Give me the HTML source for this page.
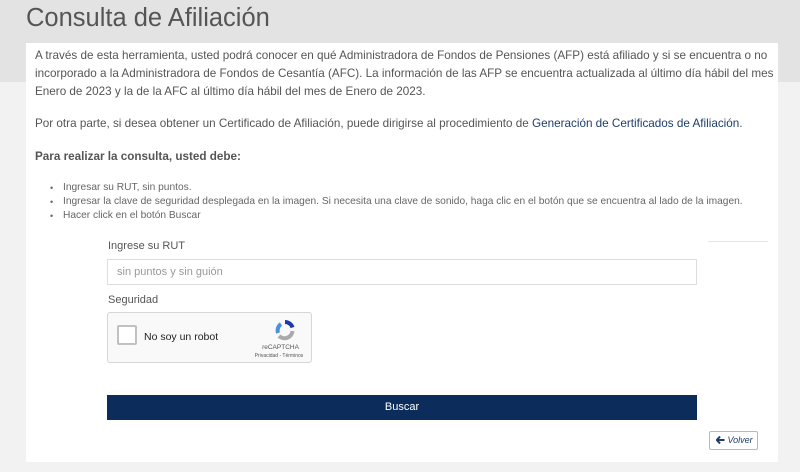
<!DOCTYPE html>
<html><head><meta charset="utf-8"><style>
*{margin:0;padding:0;box-sizing:border-box}
body{width:800px;height:472px;overflow:hidden;font-family:"Liberation Sans",sans-serif;background:#f2f2f2;position:relative;color:#555}
.top{position:absolute;left:0;top:0;width:800px;height:82px;background:#e3e3e3}
h1{position:absolute;left:26px;top:4px;font-weight:normal;font-size:25.5px;color:#555}
.card{position:absolute;left:26px;top:43px;width:752px;height:419px;background:#fff}
.p{position:absolute;left:35px;font-size:11.7px;line-height:18px;color:#555;width:740px;white-space:nowrap}
a{color:#1f3d6b;text-decoration:none}
ul{position:absolute;left:50px;top:181px;font-size:10.2px;line-height:14px;color:#666;list-style:none;white-space:nowrap}
ul li::before{content:"•";position:absolute;left:0;font-size:9px}
ul li{padding-left:13px}
.lbl{position:absolute;left:108px;font-size:11px;color:#555}
.inp{position:absolute;left:107px;top:259px;width:590px;height:26px;border:1px solid #ddd;font-size:11px;color:#999;padding:6px 9px}
.cap{position:absolute;left:107px;top:312px;width:205px;height:51px;border:1px solid #d6d6d6;border-radius:3px;background:#f9f9f9}
.cb{position:absolute;left:9px;top:12px;width:20px;height:20px;border:2px solid #c1c1c1;border-radius:2px;background:#fff}
.btn{position:absolute;left:107px;top:395px;width:590px;height:25px;background:#0c2d5c;color:#fff;font-size:11px;text-align:center;line-height:25px}
.vol{position:absolute;left:709px;top:431px;width:49px;height:19px;border:1px solid #9cc3d0;border-radius:2px;font-size:9px;font-style:italic;color:#1f3d6b;line-height:17px;padding-left:6px;white-space:nowrap}
</style></head><body>
<div class="top"></div>
<h1>Consulta de Afiliación</h1>
<div class="card"></div>
<div class="p" style="top:47px">A través de esta herramienta, usted podrá conocer en qué Administradora de Fondos de Pensiones (AFP) está afiliado y si se encuentra o no<br>incorporado a la Administradora de Fondos de Cesantía (AFC). La información de las AFP se encuentra actualizada al último día hábil del mes<br>Enero de 2023 y la de la AFC al último día hábil del mes de Enero de 2023.</div>
<div class="p" style="top:115px">Por otra parte, si desea obtener un Certificado de Afiliación, puede dirigirse al procedimiento de <a>Generación de Certificados de Afiliación</a>.</div>
<div class="p" style="top:148px;font-weight:bold">Para realizar la consulta, usted debe:</div>
<ul>
<li>Ingresar su RUT, sin puntos.</li>
<li>Ingresar la clave de seguridad desplegada en la imagen. Si necesita una clave de sonido, haga clic en el botón que se encuentra al lado de la imagen.</li>
<li>Hacer click en el botón Buscar</li>
</ul>
<div style="position:absolute;left:708px;top:241px;width:60px;height:1px;background:#e5e5e5"></div>
<div class="lbl" style="top:240px">Ingrese su RUT</div>
<div class="inp">sin puntos y sin guión</div>
<div class="lbl" style="top:294px">Seguridad</div>
<div class="cap"><div class="cb"></div>
<div style="position:absolute;left:36px;top:18px;font-size:10.5px;color:#222">No soy un robot</div>
<svg style="position:absolute;left:166px;top:6px" width="22" height="22" viewBox="0 0 22 22"><path d="M11 3a8 8 0 0 1 7.5 5.5" stroke="#1c3aa9" stroke-width="4" fill="none"/><path d="M18.5 12A8 8 0 0 1 5 17" stroke="#aaa" stroke-width="4" fill="none"/><path d="M4 14A8 8 0 0 1 7 5" stroke="#4a90e2" stroke-width="4" fill="none"/></svg>
<div style="position:absolute;left:145px;top:31px;font-size:6.5px;color:#555;width:55px;text-align:center">reCAPTCHA</div>
<div style="position:absolute;left:140px;top:40px;font-size:5px;color:#555;width:62px;text-align:center">Privacidad - Términos</div>
</div>
<div class="btn">Buscar</div>
<div class="vol"><svg width="9" height="8" viewBox="0 0 9 8" style="vertical-align:-1px"><path d="M4 0.5L0.8 4L4 7.5M1 4H8.5" stroke="#1f3d6b" stroke-width="2" fill="none"/></svg> Volver</div>
</body></html>
